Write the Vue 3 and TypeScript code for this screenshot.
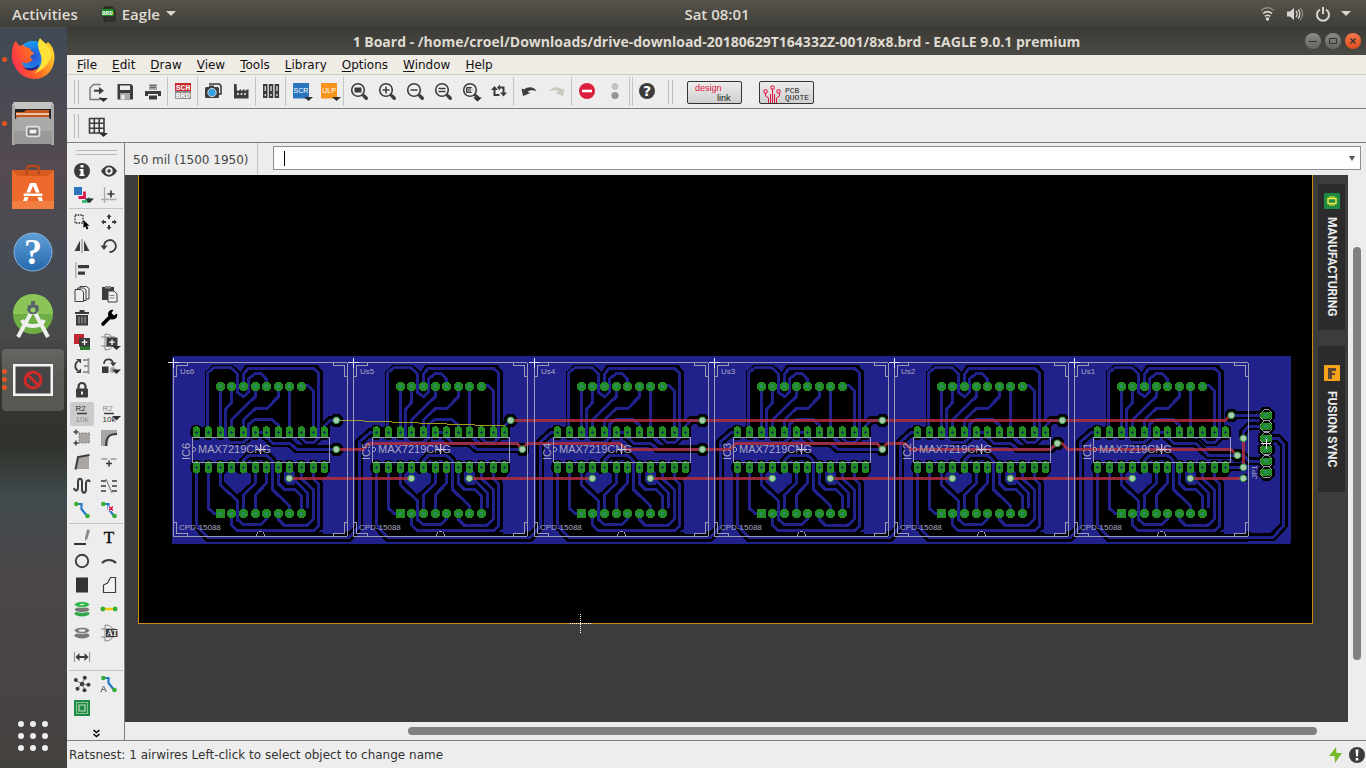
<script setup lang="ts">
import { ref } from 'vue'

interface Tool { id: string; label: string }
interface Module {
  id: number
  x: number
  topVia: [number, number]
  midVia: [number, number]
  midTrace: string
  topTrace: string
}

const ink = '#3c3c3c'
const lens = `<circle cx="11" cy="11" r="6.300" fill="#f0f0f0" stroke="${ink}" stroke-width="1.600"/><path d="M15.500 15.500l1 1" stroke="${ink}" stroke-width="2"/><path d="M17 17l2.300 2.300" stroke="${ink}" stroke-width="3.400" stroke-linecap="round"/>`

const icons: Record<string, string> = {
  open: `<path d="M15 5.500V4.500H8.500L5 8v11.500h10V17" fill="none" stroke="#777" stroke-width="1.400" stroke-linejoin="round"/><path d="M9 10.700h6" stroke="${ink}" stroke-width="2"/><path d="M14 7l5 3.700-5 3.700z" fill="${ink}"/><path d="M14 18h9l-4.500 4z" fill="#2e2e2e"/>`,
  save: `<path d="M4.500 4h13.500l2 2v13.500H4.500z" fill="${ink}"/><path d="M7 5.500h10V10H7z" fill="#eee"/><path d="M7 13h10v6.500H7z" fill="#aaa"/><path d="M8.500 15h3v4.500h-3z" fill="#eee"/>`,
  print: `<path d="M8 4h8v6H8z" fill="#aaa"/><path d="M9 5.500h6M9 7.500h6" stroke="#666"/><path d="M4 11h16v5H4z" fill="${ink}"/><path d="M7 14h10v6H7z" fill="#eee"/><path d="M8 15.500h8v4H8z" fill="${ink}"/>`,
  sch: `<path d="M4 4h16v8H4z" fill="#c9252d"/><path d="M4 12h16v8H4z" fill="#8d8d8d"/><text x="4.800" y="10.500" class="mono-tag">SCH</text><text x="4.800" y="18.500" class="mono-tag">BRD</text>`,
  cam: `<path d="M8 5h10.500l1.500 2v8h-2" fill="none" stroke="${ink}" stroke-width="1.600"/><rect x="4" y="8" width="14" height="11" rx="1.500" fill="${ink}"/><path d="M8 6.500h5V9H8z" fill="${ink}"/><circle cx="11" cy="13.500" r="4.200" fill="#3aa0e4" stroke="#eee" stroke-width=".8"/>`,
  fab: `<path d="M5 5h2.500l.5 6.500 1 .5 3-2v2l3.500-2v2l4-2v9.500H5z" fill="${ink}"/><path d="M8 15h9" stroke="#eee" stroke-width="1.500" stroke-dasharray="2 1.500"/>`,
  lib: `<path d="M4 5h4.500v14H4zM9.800 5h4.500v14H9.800zM15.600 5h4.500v14h-4.500z" fill="${ink}"/><path d="M5.500 7h1.500v5H5.500zM11.300 7h1.500v5h-1.500zM17.100 7h1.500v5h-1.500z" fill="#ccc"/><path d="M5.500 15h1.500v2H5.500zM11.300 15h1.500v2h-1.500zM17.100 15h1.500v2h-1.500z" fill="#ccc"/>`,
  scr: `<path d="M4 4h16v15.500H4z" fill="#2a75bd"/><text x="12" y="14" text-anchor="middle" class="sans-tag">SCR</text><path d="M15 18h9l-4.500 4z" fill="#2e2e2e"/>`,
  ulp: `<path d="M4 4h16v15.500H4z" fill="#f7941d"/><text x="12" y="14" text-anchor="middle" class="sans-tag">ULP</text><path d="M15 18h9l-4.500 4z" fill="#2e2e2e"/>`,
  zfit: `${lens}<path d="M7.500 8.500h7v5h-7z" fill="${ink}"/>`,
  zin: `${lens}<path d="M11 7.500v7M7.500 11h7" stroke="${ink}" stroke-width="1.500"/>`,
  zout: `${lens}<path d="M7.500 11h7" stroke="${ink}" stroke-width="1.500"/>`,
  zredraw: `${lens}<path d="M7.500 9.500h7M7.500 12.500h7" stroke="${ink}" stroke-width="1.300"/>`,
  zsel: `${lens}<path d="M7.500 8.500h5v5h-5z" fill="#888" stroke="${ink}"/><path d="M12 9h3v4h-3z" fill="#ddd"/><path d="M14 18.500h9l-4.500 4z" fill="#2e2e2e"/>`,
  refresh: `<path d="M7.500 9v7h5M16.500 15V8.500h-5" fill="none" stroke="${ink}" stroke-width="2"/><path d="M4 11l3.500-4L11 11zM13 13.500l3.500 4 3.500-4zM13 5.500v6l-3-3z" fill="${ink}"/>`,
  undo: `<path d="M4.500 9.500l1.500 7.500 7.500-3-3-1c1.500-2 5-2.500 9-1-2-4-8-5.500-12.500-1.500z" fill="${ink}"/>`,
  redo: `<path d="M19.500 9.500L18 17l-7.500-3 3-1c-1.500-2-5-2.500-9-1 2-4 8-5.500 12.500-1.500z" fill="#c8c8c0"/>`,
  stop: `<circle cx="12" cy="12" r="8" fill="#dc1f3c"/><path d="M7 10.700h10v2.600H7z" fill="#fff"/>`,
  traffic: `<circle cx="12" cy="7.500" r="3.400" fill="#c4c2bd"/><circle cx="12" cy="16.500" r="3.600" fill="#969492"/>`,
  help: `<circle cx="12" cy="12" r="8" fill="${ink}"/><text x="12" y="17" text-anchor="middle" class="q-mark">?</text>`,
  grid: `<path d="M4.500 4.500h14.500v14.500H4.500zM9.300 4.500v14.500M14.200 4.500v14.500M4.500 9.300h14.500M4.500 14.200h14.500" fill="none" stroke="${ink}" stroke-width="1.600"/><path d="M14 19h9l-4.500 4z" fill="#2e2e2e"/>`,

  info: `<circle cx="12" cy="12" r="8" fill="${ink}"/><path d="M10.500 6h3v2.500h-3zM9.500 10h4v5.500h1V17H9.500v-1.500h1v-4h-1z" fill="#fff"/>`,
  show: `<path d="M4 12c4-7.500 12-7.500 16 0-4 7.500-12 7.500-16 0z" fill="${ink}"/><circle cx="12" cy="12" r="3.700" fill="#eee"/><circle cx="12" cy="12" r="1.800" fill="${ink}"/>`,
  layers: `<path d="M12 18.500h7v-4" fill="none" stroke="#27ae60" stroke-width="2.600"/><path d="M8.500 14.500h6v-6" fill="none" stroke="#e0144c" stroke-width="2.800"/><path d="M4 4h8v8H4z" fill="#2a75bd"/><path d="M14.500 15.500h9.500l-4.500 4.500z" fill="#2e2e2e"/>`,
  mark: `<path d="M7.500 4v16M4 16.500h15.500" stroke="#aaa" stroke-width="1.300"/><path d="M14 7.500v7M10.500 11h7" stroke="${ink}" stroke-width="1.700"/>`,
  group: `<path d="M5 5h8v8H5z" fill="none" stroke="#222" stroke-width="1.300" stroke-dasharray="1.500 1.200"/><path d="M13.500 10v8l1.800-1.700 1.400 3.200 1.700-.8-1.400-3h2.500z" fill="#000"/>`,
  move: `<path d="M12 4l2.500 3h-5zM12 20l2.500-3h-5zM4 12l3-2.500v5zM20 12l-3-2.500v5zM11 7h2v2h-2zM11 15h2v2h-2zM7 11h2v2H7zM15 11h2v2h-2z" fill="${ink}"/>`,
  mirror: `<path d="M12 5v14" stroke="#999" stroke-width="1.300"/><path d="M10 6.500v10.500H4.500zM14 6.500v10.500h5.500z" fill="${ink}"/>`,
  rotate: `<path d="M7 13A6 6 0 1 1 12.500 18" fill="none" stroke="${ink}" stroke-width="1.800"/><path d="M3.500 11.500h7L7 16z" fill="${ink}"/>`,
  align: `<path d="M5.800 4v16" stroke="#aaa" stroke-width="1.400"/><path d="M8 7h11v3.300H8zM8 13.500h7v3.300H8z" fill="${ink}"/>`,
  copy: `<path d="M10 4.500h6.500l2.500 2V17h-9z" fill="#eee" stroke="${ink}"/><path d="M7.500 6h6l2.500 2v10.500H7.500z" fill="#eee" stroke="${ink}"/><path d="M5 7.500h6l2.500 2.500v9.500H5z" fill="#eee" stroke="${ink}"/>`,
  paste: `<path d="M5 5h12v13H5z" fill="${ink}"/><path d="M8 4h6v2.500H8z" fill="#888"/><path d="M11 9h6l3 3v8h-9z" fill="#eee" stroke="${ink}"/><path d="M12.500 13.500h5M12.500 16h5" stroke="#888"/>`,
  trash: `<path d="M5 6h14v2H5zM9.500 4h5v2h-5zM6 9h12v10.500H6z" fill="${ink}"/><path d="M9 10.500v7M12 10.500v7M15 10.500v7" stroke="#aaa"/>`,
  wrench: `<path d="M6 18l6.500-6.500" stroke="#000" stroke-width="3.600" stroke-linecap="round"/><path d="M11 8c0-3 3-5 5.500-4l-2 3 2.500 2.500 3-2c1 3-1 6-4.500 6-2.500 0-4.500-2-4.500-5.500z" fill="#000"/>`,
  add: `<path d="M4 4h10v10H4z" fill="#c1272d"/><path d="M10 15h10v5H10z" fill="#2c7a2c"/><path d="M9 8h11v8.500H9z" fill="${ink}"/><path d="M14.500 9.500v5.500M11.800 12.200h5.500" stroke="#fff" stroke-width="1.300"/>`,
  addpart: `<path d="M4 7h14M4 16h13M8 4v16M8 4c6 0 9 4 10 8-1 4-4 8-10 8" fill="none" stroke="#888"/><path d="M9.500 7.500h11v9h-11z" fill="${ink}"/><path d="M15 9.500v5.500M12.200 12.200h5.500" stroke="#fff" stroke-width="1.300"/><path d="M15 16h9l-4.500 4z" fill="#2e2e2e"/>`,
  pinswap: `<path d="M8 7a6 6 0 0 0 0 10" fill="none" stroke="${ink}" stroke-width="1.800"/><path d="M6 5h5v4.500zM6 19h5v-4.500z" fill="${ink}"/><path d="M18.500 4v16M13 6h5M14 12h4M13 18h5" stroke="#999" stroke-width="1.800"/>`,
  replace: `<path d="M7 10c0-6 8-6 9-1" fill="none" stroke="${ink}" stroke-width="1.600"/><path d="M13 8.500h6.500l-3.300 4zM5 12.500h6.500V19H5z" fill="${ink}"/><circle cx="16" cy="16" r="3" fill="#aaa"/><path d="M15 15.500h9l-4.500 4.500z" fill="#2e2e2e"/>`,
  lock: `<path d="M8.500 11V8.500a3.500 3.500 0 0 1 7 0V11" fill="none" stroke="${ink}" stroke-width="2.200"/><rect x="6" y="10.500" width="12" height="9" rx="1" fill="${ink}"/><path d="M11 13.500h2v3h-2z" fill="#eee"/>`,
  name: `<text x="5.500" y="9" class="r-tag dark">R2</text><path d="M7 11.500h10" stroke="${ink}" stroke-width="1.500"/><text x="5.500" y="20" class="r-tag pale">10k</text>`,
  value: `<text x="5.500" y="9" class="r-tag pale">R2</text><path d="M7 11.500h10" stroke="${ink}" stroke-width="1.500"/><text x="5.500" y="20" class="r-tag dark">10k</text><path d="M15 14h9l-4.500 4.500z" fill="#2e2e2e"/>`,
  smash: `<path d="M9 7h10.500v10H9z" fill="#a9a6a4"/><path d="M9 7h10.500v10H9z" fill="none" stroke="#777" stroke-dasharray="1.500 1.500"/><path d="M6 3.500v5M3.500 6h5M6 14.500v5M3.500 17h5" stroke="${ink}" stroke-width="1.400"/>`,
  miter: `<path d="M4 4h16v4c-7 0-9 3-9 12H4z" fill="#a9a6a4"/><path d="M9 20c0-9 3-12 11-12" fill="none" stroke="${ink}" stroke-width="2"/>`,
  split: `<path d="M8 7l11-2v14H5.500z" fill="#a9a6a4"/><path d="M5.500 19.500L8 7l11.500-2" fill="none" stroke="${ink}" stroke-width="2"/>`,
  optimize: `<path d="M4.500 9h6M13.500 9h6" stroke="#999" stroke-width="1.300"/><path d="M12 10.500v6M9 13.500h6" stroke="${ink}" stroke-width="1.600"/>`,
  meander: `<path d="M4 14c1 4 4 3 4-1V8c0-4.500 4-4.500 4 0v7c0 5 4 5 4 0V9c0-3 3-3.500 4-1" fill="none" stroke="${ink}" stroke-width="2"/>`,
  diff: `<path d="M4 7h5M4 12h5M4 17h5M15 7h5M15 12h5M15 17h5" stroke="${ink}" stroke-width="1.500"/><path d="M9 5l6 14" stroke="#888" stroke-width="1.200"/>`,
  route: `<path d="M6 6h5.500v5l6 7.500" fill="none" stroke="#2878c8" stroke-width="2.200"/><circle cx="6.300" cy="6" r="2.300" fill="#38b038"/><circle cx="17.500" cy="18" r="2.300" fill="#38b038"/>`,
  ripup: `<path d="M6 6h5.500v5l6 7.500" fill="none" stroke="#2878c8" stroke-width="2.200"/><circle cx="6.300" cy="6" r="2.300" fill="#38b038"/><circle cx="17.500" cy="18" r="2.300" fill="#38b038"/><path d="M11 8h6v5h-6z" fill="#fff"/><path d="M12 8.500l4 4M16 8.500l-4 4" stroke="#d2143a" stroke-width="1.600"/>`,
  line: `<path d="M4 19h12" stroke="#000" stroke-width="1.600"/><path d="M17 4.500l3 .5-2.500 8.500-2 2.500-.5-3z" fill="#888"/>`,
  text: `<text x="12" y="18" text-anchor="middle" class="t-tool">T</text>`,
  circle: `<circle cx="12" cy="12" r="6.200" fill="none" stroke="${ink}" stroke-width="1.900"/>`,
  arc: `<path d="M5 14c4-4 10-4 14 0" fill="none" stroke="${ink}" stroke-width="2.200"/>`,
  rect: `<path d="M6 4.500h12v15H6z" fill="#333"/>`,
  polygon: `<path d="M6.500 19.500V12l4-2 3-5.500h5v15z" fill="#f4f4f4" stroke="${ink}" stroke-width="1.200"/>`,
  via: `<ellipse cx="12" cy="16.500" rx="7.500" ry="3" fill="#2fa84a"/><ellipse cx="12" cy="12.500" rx="7.500" ry="3" fill="#777" stroke="#eee" stroke-width=".7"/><ellipse cx="12" cy="7.500" rx="7.500" ry="3" fill="#2fb84a" stroke="#eee" stroke-width=".7"/><ellipse cx="12" cy="7.500" rx="2.500" ry=".8" fill="#ddf0dd"/>`,
  signal: `<path d="M6 12h12" stroke="#f0c800" stroke-width="2.400"/><circle cx="5.800" cy="12" r="2.400" fill="#38b038"/><circle cx="18.200" cy="12" r="2.400" fill="#38b038"/>`,
  hole: `<ellipse cx="12" cy="14.500" rx="7.500" ry="3" fill="#777"/><ellipse cx="12" cy="9.500" rx="7.500" ry="3.200" fill="#777" stroke="#eee" stroke-width=".8"/><ellipse cx="12" cy="9.500" rx="3.500" ry="1.200" fill="#eee"/>`,
  attr: `<path d="M4 8h14M4 16h13M8 4v16M8 4c6 0 9 4 10 8-1 4-4 8-10 8" fill="none" stroke="#888"/><path d="M9 8h11.500v8H9z" fill="${ink}"/><text x="10" y="15" class="a-tag">AT</text>`,
  dimension: `<path d="M4.500 7v10M19.500 7v10" stroke="#999" stroke-width="1.200"/><path d="M8 12h8" stroke="${ink}" stroke-width="2"/><path d="M5.500 12l4-4v8zM18.500 12l-4-4v8z" fill="${ink}"/>`,
  ratsnest: `<path d="M12 12L5.500 8M12 12l3-6M12 12l7 .8M12 12l3 6M12 12l-4.500 4.500" stroke="#777"/><g fill="${ink}"><circle cx="12" cy="12" r="2.200"/><circle cx="5.800" cy="8" r="2"/><circle cx="14.800" cy="5.800" r="2"/><circle cx="18.500" cy="12.800" r="2"/><circle cx="14.500" cy="18.300" r="2"/><circle cx="7.500" cy="16.800" r="2"/></g>`,
  autoroute: `<path d="M6 6h5.500v5l6 7.500" fill="none" stroke="#2878c8" stroke-width="2.200"/><circle cx="6.300" cy="6" r="2.300" fill="#38b038"/><circle cx="17.500" cy="18" r="2.300" fill="#38b038"/><text x="3.500" y="20" class="auto-tag">A</text>`,
  drc: `<path d="M4 4h16v16H4z" fill="#1f8a44"/><path d="M6.500 6.500h11v11h-11z" fill="none" stroke="#d6ecd6" stroke-dasharray="1.200 .8"/><path d="M9 9h6v6H9z" fill="none" stroke="#bfe0c4" stroke-width="1.200"/>`,
}

const menus = ['File', 'Edit', 'Draw', 'View', 'Tools', 'Library', 'Options', 'Window', 'Help']

const t = (id: string, label: string): Tool => ({ id, label })
const topGroups: Tool[][] = [
  [t('open', 'Open'), t('save', 'Save'), t('print', 'Print')],
  [t('sch', 'Switch to schematic')],
  [t('cam', 'CAM processor'), t('fab', 'Manufacturing')],
  [t('lib', 'Use library')],
  [t('scr', 'Run script'), t('ulp', 'Run ULP')],
  [t('zfit', 'Zoom to fit'), t('zin', 'Zoom in'), t('zout', 'Zoom out'), t('zredraw', 'Redraw'), t('zsel', 'Zoom select'), t('refresh', 'Refresh')],
  [t('undo', 'Undo'), t('redo', 'Redo')],
  [t('stop', 'Cancel'), t('traffic', 'Execute')],
  [t('help', 'Help')],
]
const sideGroups: (Tool | null)[][] = [
  [t('info', 'Info'), t('show', 'Show'), t('layers', 'Layers'), t('mark', 'Mark')],
  [
    t('group', 'Group'), t('move', 'Move'), t('mirror', 'Mirror'), t('rotate', 'Rotate'),
    t('align', 'Align'), null, t('copy', 'Copy'), t('paste', 'Paste'),
    t('trash', 'Delete'), t('wrench', 'Change'), t('add', 'Add'), t('addpart', 'Add part'),
    t('pinswap', 'Pinswap'), t('replace', 'Replace'), t('lock', 'Lock'), null,
    t('name', 'Name'), t('value', 'Value'), t('smash', 'Smash'), t('miter', 'Miter'),
    t('split', 'Split'), t('optimize', 'Optimize'), t('meander', 'Meander'), t('diff', 'Slice'),
    t('route', 'Route'), t('ripup', 'Ripup'),
  ],
  [
    t('line', 'Line'), t('text', 'Text'), t('circle', 'Circle'), t('arc', 'Arc'),
    t('rect', 'Rect'), t('polygon', 'Polygon'), t('via', 'Via'), t('signal', 'Signal'),
    t('hole', 'Hole'), t('attr', 'Attribute'), t('dimension', 'Dimension'), null,
  ],
  [t('ratsnest', 'Ratsnest'), t('autoroute', 'Autorouter'), t('drc', 'DRC'), null],
]

const activeTool = ref('name')
const command = ref('')

/* Board geometry: module drawings use a grid of three units per screen pixel. */
const pins = [94, 130, 166, 199, 235, 271, 304, 340, 373, 409, 445, 478]
const pads = [166, 199, 235, 271, 304, 340, 373, 409]
const baseMid = 'M271 247H304V262L325 280H375L395 298'
const modules: Module[] = [
  { id: 6, x: 165, topVia: [514, 211], midVia: [514, 298], midTrace: baseMid + 'H514', topTrace: 'M478 247V228L495 211H514' },
  { id: 5, x: 345, topVia: [497, 211], midVia: [532, 298], midTrace: baseMid + 'H532', topTrace: 'M478 247V228L497 211' },
  { id: 4, x: 526, topVia: [529, 211], midVia: [529, 298], midTrace: baseMid + 'H529', topTrace: 'M478 247V228L495 211H529' },
  { id: 3, x: 706, topVia: [529, 211], midVia: [529, 298], midTrace: baseMid + 'H529', topTrace: 'M478 247V228L495 211H529' },
  { id: 2, x: 886, topVia: [529, 211], midVia: [514, 280], midTrace: baseMid + 'H495L514 280', topTrace: 'M478 247V228L495 211H529' },
  { id: 1, x: 1066, topVia: [496, 196], midVia: [514, 316], midTrace: 'M271 247H304V262L325 280H390L427 316H514', topTrace: 'M496 196V190' },
]
const traces = [
  'M129 247V68L146 53H197L218 72V128L236 140L252 125V85L270 72H290L304 88V108',
  'M235 108V72L250 55H445L461 70V262L445 279H425L409 262V247',
  'M166 108V247',
  'M199 108V158L183 177V265L195 278H235L252 262V222L268 210H322L340 225V247',
  'M271 108V140L199 210V247',
  'M340 108V140L304 177H270L235 210V247',
  'M373 108V247',
  'M409 108H430L445 122V247',
  'M94 352V525L130 564H550L555 559',
  'M130 352V475L147 491H166',
  'M166 352V405L217 452V508L235 524H288L304 508V491',
  'M271 352V400L235 435V491',
  'M304 352V400L271 435V491',
  'M235 352V332L250 317H305L322 332V418L373 468V491',
  'M340 352V400L360 420H392L409 438V491',
  'M385 385L428 430V475',
  'M409 352V385L445 420V508L425 526H358L340 508V491',
  'M445 352V385L461 402V528L447 541H215L199 525V491',
]
const link = 'M94 247H75L43 277V530L10 564H0'
const octagon = (cx: number, cy: number, r: number): string => {
  const k = r * 0.42
  return `M${cx - k} ${cy - r}h${2 * k}L${cx + r} ${cy - k}v${2 * k}L${cx + k} ${cy + r}h${-2 * k}L${cx - r} ${cy + k}v${-2 * k}z`
}
const headerPins = [196, 229, 265, 298, 334, 367]
</script>

<template>
  <div class="desktop">
    <header class="topbar">
      <button class="top-item">Activities</button>
      <button class="top-item app-menu">
        <svg width="14" height="16" viewBox="0 0 14 16" aria-hidden="true">
          <path d="M2 1h8l3 3v11H2z" fill="#33342f" stroke="#22231f" />
          <path d="M0 3h12v7H0z" fill="#1e8a1e" />
          <text x="0" y="9" class="brd-tag">BRD</text>
        </svg>
        Eagle
        <span class="caret-down"></span>
      </button>
      <time class="clock">Sat 08:01</time>
      <button class="tray" aria-label="System menu">
        <svg width="84" height="18" viewBox="0 0 84 18" fill="none" stroke="#d8d6d0" aria-hidden="true">
          <path d="M1 5.500c4-3.500 9-3.500 13 0" stroke="#8d8b85" stroke-width="1.600" />
          <path d="M3 8.500c3-2.500 6-2.500 9 0M4.800 11.300c2-1.500 3.500-1.500 5.500 0" stroke-width="1.600" />
          <circle cx="7.500" cy="14" r="1.800" fill="#d8d6d0" stroke="none" />
          <path d="M27 6.500h3l4-3.500v12l-4-3.500h-3z" fill="#d8d6d0" stroke="none" />
          <path d="M36 6c1.500 1.500 1.500 4.500 0 6M38 4.500c2.500 2.500 2.500 6.500 0 9" stroke-width="1.300" />
          <path d="M40 3c3.500 3.500 3.500 8.500 0 12" stroke="#8d8b85" stroke-width="1.300" />
          <path d="M60 4.500a6 6 0 1 0 6 0M63 2v7" stroke-width="2" />
        </svg>
        <span class="caret-down"></span>
      </button>
    </header>

    <div class="workspace">
      <nav class="dock" aria-label="Dock">
        <button class="dock-app" aria-label="Firefox">
          <i class="dot"></i>
          <svg width="48" height="48" viewBox="0 0 48 48">
            <defs>
              <linearGradient id="fox" x1="0" y1="0.700" x2="1" y2="0.300">
                <stop offset="0" stop-color="#ff2a55" /><stop offset=".5" stop-color="#ff6a20" /><stop offset="1" stop-color="#ffd52a" />
              </linearGradient>
              <radialGradient id="globe"><stop offset="0" stop-color="#2a4bd0" /><stop offset="1" stop-color="#18a0f0" /></radialGradient>
            </defs>
            <circle cx="24" cy="21" r="16" fill="url(#globe)" />
            <path d="M5 7c-3 8-3 16 0 22 8 18 32 19 39 1 2-6 2-12 0-17-1-3-3-5-5-7-3 3-5 5-5 8 3 9 0 18-9 20-7 1-12-5-12-8 4 3 8 0 11-2-4-3-3-5 1-6 0-2-4-2-4-6-3 0-5-1-7-3-2 0-2 0-3 1-2-1-3-3-4-5-1 1-1 1-2 2z" fill="url(#fox)" />
            <path d="M31 2c3 4 10 7 12 17-4 12-12 16-18 19 8-7 9-15 6-21-2-6-3-10 0-15z" fill="#ffe13a" />
            <path d="M12 29c4 5 14 4 18-1-1 7-11 10-18 1z" fill="#2a1a7a" />
          </svg>
        </button>
        <button class="dock-app" aria-label="Files">
          <i class="dot"></i>
          <svg width="48" height="48" viewBox="0 0 48 48">
            <path d="M5 2h38l2 3v12H3V5z" fill="#c4c4c2" />
            <path d="M6 9h36v10H6z" fill="#222" />
            <path d="M7 12h8l2-2h23v10H7z" fill="#c6551e" />
            <path d="M7 14h33" stroke="#f4e6d6" stroke-width="1.500" />
            <path d="M3 5h3v40H3zM42 5h3v40h-3z" fill="#a8a8a6" />
            <path d="M5 19h2l1-2h32l1 2h2v25H5z" fill="#a9a9a7" />
            <path d="M5 31h38v13H5z" fill="#8a8a8a" opacity=".5" />
            <rect x="17.500" y="26.500" width="13" height="10" rx="2" fill="none" stroke="#e0e0de" stroke-width="1.500" />
            <rect x="20" y="29" width="8" height="5" fill="#f5f5f5" stroke="#555" />
          </svg>
        </button>
        <button class="dock-app" aria-label="Ubuntu Software">
          <svg width="48" height="48" viewBox="0 0 48 48">
            <path d="M3 6h42v39H3z" fill="#ee6a2c" />
            <path d="M3 6h42L39 12H9z" fill="#d65a20" />
            <path d="M3 37h42v8H3z" fill="#f58a50" opacity=".6" />
            <path d="M18 11V5q0-3 3-3h6q3 0 3 3v6" fill="none" stroke="#b84a1a" stroke-width="2.500" />
            <path d="M21 19h6l7 18h-4l-1.500-4h-9L18 37h-4z" fill="#fff" />
            <path d="M24 22l-3.500 8h7z" fill="#ee6a2c" />
            <rect x="14" y="29" width="20" height="3.500" rx="1.500" fill="#fff" stroke="#ee6a2c" />
          </svg>
        </button>
        <button class="dock-app" aria-label="Help">
          <svg width="48" height="48" viewBox="0 0 48 48">
            <defs><linearGradient id="hp" x1="0" y1="0" x2="0" y2="1"><stop offset="0" stop-color="#5f9ed6" /><stop offset="1" stop-color="#2568ad" /></linearGradient></defs>
            <circle cx="24" cy="24" r="19" fill="url(#hp)" stroke="#86b6e0" stroke-width="1" />
            <text x="24" y="36" text-anchor="middle" class="dock-q">?</text>
          </svg>
        </button>
        <button class="dock-app" aria-label="Android Studio">
          <svg width="48" height="52" viewBox="0 0 48 52">
            <circle cx="24" cy="24" r="20" fill="#6fae45" />
            <path d="M4 24a20 20 0 0 1 40 0z" fill="#8cc45a" />
            <path d="M13 30c3 8 19 8 22 0M23 21L9 47M25 21l14 26" fill="none" stroke="#eee" stroke-width="4" />
            <path d="M22 11h4v4h3l1 5-3 4h-6l-3-4 1-5h3z" fill="#59646a" />
            <circle cx="24" cy="20" r="2.500" fill="#9ad06a" />
          </svg>
        </button>
        <button class="dock-app running" aria-label="Eagle">
          <i class="dot three"></i>
          <svg width="48" height="48" viewBox="0 0 48 48">
            <path d="M4 8h40v32H4z" fill="#f4f4f4" />
            <path d="M6.500 10.500h35v27h-35z" fill="#444" />
            <circle cx="24" cy="24" r="8" fill="none" stroke="#d02a2a" stroke-width="3" />
            <path d="M18.500 18.500l11 11" stroke="#d02a2a" stroke-width="3" />
          </svg>
        </button>
        <button class="apps-grid" aria-label="Show applications">
          <i v-for="n in 9" :key="n"></i>
        </button>
      </nav>

      <main class="window">
        <div class="titlebar">
          <h1>1 Board - /home/croel/Downloads/drive-download-20180629T164332Z-001/8x8.brd - EAGLE 9.0.1 premium</h1>
          <div class="win-buttons">
            <button aria-label="Minimize"><svg width="16" height="16"><path d="M4 8.500h8" stroke="#33322e" /></svg></button>
            <button aria-label="Maximize"><svg width="16" height="16"><path d="M4.500 5.500h7v5h-7z" stroke="#33322e" fill="none" /></svg></button>
            <button class="close" aria-label="Close"><svg width="16" height="16"><path d="M5.500 5.500l5 5M10.500 5.500l-5 5" stroke="#33322e" stroke-width="1.200" /></svg></button>
          </div>
        </div>

        <nav class="menubar">
          <button v-for="m in menus" :key="m"><u>{{ m[0] }}</u>{{ m.slice(1) }}</button>
        </nav>

        <div class="toolbar">
          <span class="grip"></span>
          <div v-for="(g, gi) in topGroups" :key="gi" class="tool-group" :class="{ wide: gi === topGroups.length - 1 }">
            <button v-for="b in g" :key="b.id" class="tool" :aria-label="b.label">
              <svg width="24" height="24" viewBox="0 0 24 24" v-html="icons[b.id]"></svg>
            </button>
          </div>
          <span class="grip second"></span>
          <button class="brand" aria-label="design link">
            <svg width="53" height="21" viewBox="0 0 53 21">
              <text x="7" y="9" class="brand-text red">design</text>
              <text x="29" y="19" class="brand-text">link</text>
            </svg>
          </button>
          <button class="brand" aria-label="PCB quote">
            <svg width="53" height="21" viewBox="0 0 53 21">
              <path d="M5.500 11v3l3 2v5M12.500 6v15M19.500 11v3l-3 2v5M10.500 21v-9M14.500 21v-9" fill="none" stroke="#e0143c" />
              <path d="M4 8h3v3H4zM11 4h3v3h-3zM17 8h3v3h-3z" fill="#fff" stroke="#e0143c" />
              <text x="25" y="11" class="quote-text">PCB</text>
              <text x="25" y="18" class="quote-text">QUOTE</text>
            </svg>
          </button>
        </div>

        <div class="toolbar">
          <span class="grip"></span>
          <button class="tool" aria-label="Grid">
            <svg width="24" height="24" viewBox="0 0 24 24" v-html="icons.grid"></svg>
          </button>
        </div>

        <div class="editor">
          <aside class="tools">
            <span class="grip-flat"></span>
            <div v-for="(g, gi) in sideGroups" :key="gi" class="side-group">
              <template v-for="(b, bi) in g" :key="bi">
                <button v-if="b" class="side-tool" :class="{ active: b.id === activeTool }" :aria-label="b.label" @click="activeTool = b.id">
                  <svg width="24" height="24" viewBox="0 0 24 24" v-html="icons[b.id]"></svg>
                </button>
                <span v-else></span>
              </template>
            </div>
            <button class="more" aria-label="More tools">
              <svg width="9" height="9" viewBox="0 0 9 9"><path d="M1.500 1l3 2.500L7.500 1M1.500 5l3 2.500L7.500 5" fill="none" stroke="#000" stroke-width="1.500" /></svg>
            </button>
          </aside>

          <section class="view">
            <div class="command-row">
              <output class="coords">50 mil (1500 1950)</output>
              <div class="combo">
                <span class="text-caret"></span>
                <input v-model="command" type="text" aria-label="Command line" />
                <button aria-label="Command history"><span></span></button>
              </div>
            </div>

            <div class="canvas-area">
              <div class="canvas">
                <svg class="board" width="100%" height="100%" role="img" aria-label="Board layout">
                  <g transform="translate(-125 -175)" shape-rendering="crispEdges">
                    <rect x="138.500" y="170.500" width="1174" height="453" fill="#000" stroke="#d18616" />
                    <rect x="172" y="356" width="1119" height="188" rx="2" fill="#21218c" />

                    <g v-for="m in modules" :key="'c' + m.id" :transform="`translate(${m.x} 350) scale(.33333)`">
                      <path d="M121 240V65L143 45H203L227 66L241 45H457L474 65V225L495 232V262H82V230H121z" fill="#000" />
                      <path d="M86 345H490V372L470 390L474 400V535L462 545H474V556H130L86 520z" fill="#000" />
                      <g fill="none" stroke="#000" stroke-width="25">
                        <path :d="m.topTrace" /><path :d="m.midTrace" />
                        <path v-if="m.id < 6" :d="link" />
                        <path d="M199 247V265L205 274H235L252 262M409 247V262L425 276H445L461 262V247" />
                        <path d="M94 352V525L130 564H540L555 549" />
                        <path d="M235 352V332L250 317H305L322 332V360" />
                      </g>
                      <path v-for="x in pins" :key="'h' + x" :d="`M${x} 242V252M${x} 347V357`" stroke="#000" stroke-width="36" stroke-linecap="round" />
                      <path :d="octagon(m.topVia[0], m.topVia[1], 20)" fill="#000" />
                      <path :d="octagon(m.midVia[0], m.midVia[1], 20)" fill="#000" />
                      <path d="M178 372L190 362H210L222 372L246 366L258 372V397L217 433L178 395z" fill="#21218c" />
                      <path d="M358 368L366 360H382L391 368V404H365L358 397z" fill="#21218c" />
                      <g fill="none" stroke="#21218c" stroke-width="9">
                        <path v-for="(d, i) in traces" :key="i" :d="d" />
                        <path :d="m.topTrace" /><path :d="m.midTrace" />
                        <path v-if="m.id < 6" :d="link" />
                      </g>
                    </g>

                    <g transform="translate(1060 350) scale(.33333)" fill="none">
                      <g stroke="#000" stroke-width="25">
                        <path d="M514 196H619M550 265V245L566 229H619M550 352H496M532 316H550L568 334H619M550 385H560" />
                        <path d="M619 265H655L672 283V525L638 561H540" />
                      </g>
                      <path v-for="y in headerPins" :key="'k' + y" :d="octagon(619, y, 25)" fill="#000" />
                      <g stroke="#21218c" stroke-width="9">
                        <path d="M514 196H619M550 265V245L566 229H619M550 352H496M532 316H550L568 334H619" />
                        <path d="M619 265H655L672 283V525L638 564H540" />
                      </g>
                    </g>

                    <g v-for="m in modules" :key="'p' + m.id" :transform="`translate(${m.x} 350) scale(.33333)`">
                      <path v-for="x in pins" :key="x" :d="`M${x} 240V254M${x} 345V359`" stroke="#228c22" stroke-width="22" stroke-linecap="round" />
                      <path v-for="x in pins" :key="'d' + x" :d="`M${x - 5} 247h10M${x} 242v10M${x - 5} 352h10M${x} 347v10`" stroke="#12305c" stroke-width="3" />
                      <path v-for="x in pads" :key="'t' + x" :d="octagon(x, 109, 14)" fill="#228c22" />
                      <path v-for="x in pads.slice(1)" :key="'b' + x" :d="octagon(x, 491, 14)" fill="#228c22" />
                      <path d="M153 478h27v27h-27z" fill="#228c22" />
                      <path v-for="x in pads" :key="'e' + x" :d="octagon(x, 109, 6) + octagon(x, 491, 6)" fill="#2a8c58" />
                    </g>
                    <g transform="translate(1060 350) scale(.33333)">
                      <g v-for="y in headerPins" :key="y">
                        <path :d="octagon(619, y, 17)" fill="none" stroke="#9c9cac" stroke-width="3" />
                        <rect x="601" :y="y - 10" width="36" height="20" rx="9" fill="#228c22" />
                        <path :d="octagon(619, y, 6)" fill="#2a8c58" />
                      </g>
                    </g>

                    <g fill="none" stroke="#b4303c" stroke-opacity=".82" stroke-width="3">
                      <path d="M510 420.500H1225L1231 415" />
                      <path d="M336 449.500H363L369 443.500H517L522 449.500L527 443.500H620L627 449.500H730L736 443.500H877L882 449.500L887 443.500H905L911 449.500H1050L1057 443.500H1062L1068 449.500H1231L1237 455.500" />
                      <path d="M289 478.500H411M470 478.500H592M650 478.500H772M830 478.500H952M1010 478.500H1132M1190 478.500H1243M1243.500 438V467" />
                    </g>
                    <path d="M336 420.500H364M364 421.500H392M392 422.500H419M419 423.500H447M447 424.500H475M475 425.500H505" stroke="#a09a20" />

                    <g v-for="m in modules" :key="'s' + m.id">
                      <g :transform="`translate(${m.x} 350) scale(.33333)`">
                        <g fill="none" stroke="#9a9ab4" stroke-width="3">
                          <path d="M25 38H547V559H25zM82 262H494V338H82z" />
                          <path d="M25 80H34V46H68V38M505 38V46H540V80H547M25 517H34V550H68V559M505 559V550H540V517H547" />
                          <path d="M82 290Q92 291 92 298T82 306M275 558V552L281 545H292L298 552V558" />
                        </g>
                        <g v-for="(v, i) in [m.topVia, m.midVia, [373, 385], [199, 385]]" :key="i" shape-rendering="auto">
                          <template v-if="i < 3 || m.id < 6">
                            <path :d="octagon(v[0], v[1], 11)" fill="#3a9a4c" />
                            <path :d="octagon(v[0], v[1], 8)" fill="#a9ccae" />
                          </template>
                        </g>
                        <path d="M10 38H41M25 23V53M272 298H302M287 283V313" stroke="#e8e8f4" stroke-width="3" />
                      </g>
                      <text :x="m.x + 15" y="374" class="silk small">Us{{ m.id }}</text>
                      <text :x="m.x + 14" y="530" class="silk small">CPD-15088</text>
                      <text :x="m.x + 33" y="453" class="silk">MAX7219CNG</text>
                      <text :transform="`translate(${m.x + 25} 460) rotate(-90)`" class="silk">IC{{ m.id }}</text>
                    </g>
                    <g transform="translate(1060 350) scale(.33333)">
                      <g v-for="y in [265, 352, 385]" :key="y" shape-rendering="auto">
                        <path :d="octagon(550, y, 11)" fill="#3a9a4c" />
                        <path :d="octagon(550, y, 8)" fill="#a9ccae" />
                      </g>
                      <path d="M604 281H634M619 266V296" stroke="#e8e8f4" stroke-width="3" />
                    </g>
                    <text transform="translate(1257 479) rotate(-90)" class="silk small">JP1</text>
                    <path d="M570 623.500H591M580.500 614V633" stroke="#fff" stroke-dasharray="1 1" />
                  </g>
                </svg>

                <button class="side-tab manufacturing">
                  <svg width="16" height="16" viewBox="0 0 16 16" aria-hidden="true">
                    <rect width="16" height="16" rx="1" fill="#1f8a44" />
                    <path d="M4 5.500h8v5H4z" fill="none" stroke="#f0f040" stroke-width="1.500" />
                    <path d="M6 3v2M8 3v2M10 3v2M6 11v2M8 11v2M10 11v2" stroke="#e8e840" />
                  </svg>
                  <span>MANUFACTURING</span>
                </button>
                <button class="side-tab fusion">
                  <svg width="16" height="16" viewBox="0 0 16 16" aria-hidden="true">
                    <rect width="16" height="16" rx="1" fill="#f7a21b" />
                    <path d="M4 3h8v3H8v2h3v2H8v4H4z" fill="#5a4632" />
                  </svg>
                  <span>FUSION SYNC</span>
                </button>
              </div>
              <div class="v-scroll"><i></i></div>
            </div>
            <div class="h-scroll"><i></i></div>
          </section>
        </div>

        <footer class="status">
          <p>Ratsnest: 1 airwires Left-click to select object to change name</p>
          <svg width="36" height="18" viewBox="0 0 36 18" aria-hidden="true">
            <path d="M7 1L0 10h5.500L6 17l7-10H7.500z" fill="#76b82a" />
            <circle cx="28" cy="9" r="8" fill="#3c3c3c" />
            <path d="M26.500 3.500h3l-.6 7h-1.800zM26.700 12h2.600v2.500h-2.600z" fill="#fff" />
          </svg>
        </footer>
      </main>
    </div>
  </div>
</template>

<style>
body {
  margin: 0;
}
.mono-tag {
  font: bold 8px "Liberation Mono", monospace;
  fill: #fff;
}
.sans-tag {
  font: 7px "Liberation Sans", sans-serif;
  fill: #fff;
}
.q-mark {
  font: bold 14px "DejaVu Sans", sans-serif;
  fill: #fff;
}
.r-tag {
  font: 8px "Liberation Sans", sans-serif;
}
.r-tag.dark {
  fill: #2c2c2c;
}
.r-tag.pale {
  fill: #8c8c8c;
}
.t-tool {
  font: 17px "Liberation Serif", serif;
  fill: #000;
  stroke: #000;
  stroke-width: 0.3px;
}
.a-tag {
  font: bold 8px "Liberation Serif", serif;
  fill: #fff;
}
.auto-tag {
  font: 9px "Liberation Sans", sans-serif;
  fill: #222;
}
</style>

<style scoped>
* {
  box-sizing: border-box;
}
button {
  margin: 0;
  padding: 0;
  border: 0;
  background: none;
  color: inherit;
  font: inherit;
}
svg {
  display: block;
}
.desktop {
  display: flex;
  flex-direction: column;
  height: 100vh;
  font: 12px "DejaVu Sans", sans-serif;
  color: #1c1c1c;
}
.topbar {
  position: relative;
  display: flex;
  flex: none;
  align-items: center;
  height: 27px;
  padding: 0 12px;
  background: linear-gradient(#56534a, #3f3e39);
  color: #dfdbd2;
  font: 600 15px "Open Sans", sans-serif;
}
.app-menu {
  display: flex;
  align-items: center;
  gap: 6px;
  margin-left: 24px;
}
.brd-tag {
  font: bold 6px "Liberation Mono", monospace;
  fill: #fff;
}
.caret-down {
  border: 5px solid transparent;
  border-top-color: #d8d6d0;
  border-bottom: 0;
}
.clock {
  position: absolute;
  left: 50%;
  margin-left: 34px;
  transform: translateX(-50%);
}
.tray {
  display: flex;
  align-items: center;
  margin: 0 3px 0 auto;
}
.tray svg {
  margin-right: -3px;
}
.workspace {
  display: flex;
  flex: 1;
  min-height: 0;
}
.dock {
  display: flex;
  flex: none;
  flex-direction: column;
  align-items: center;
  gap: 2px;
  width: 67px;
  padding: 2px 2px 17px;
  background: linear-gradient(#3f4a54 0, #554a51 140px, #474b52 230px, #484a49 310px, #34362f 350px, #30332c 420px, #414a4e 470px, #4b4547 560px, #484446 640px, #44423f);
}
.dock-app {
  position: relative;
  display: grid;
  place-items: center;
  width: 62px;
  height: 62px;
  margin-right: 1px;
  border-radius: 4px;
}
.running {
  background: rgba(255, 255, 255, 0.18);
}
.dot {
  position: absolute;
  left: 0;
  top: 28px;
  width: 5px;
  height: 5px;
  border-radius: 50%;
  background: #e95420;
}
.dot.three {
  box-shadow: 0 -8px #e95420, 0 8px #e95420;
}
.dock-q {
  font: bold 36px "Liberation Serif", serif;
  fill: #fff;
}
.apps-grid {
  display: grid;
  grid-template-columns: repeat(3, 6px);
  gap: 6px;
  margin: auto 1px 0 0;
}
.apps-grid i {
  width: 6px;
  height: 6px;
  border-radius: 50%;
  background: #eee;
}
.window {
  display: flex;
  flex: 1;
  flex-direction: column;
  min-width: 0;
  background: #ededed;
}
.titlebar {
  position: relative;
  display: flex;
  flex: none;
  align-items: center;
  justify-content: center;
  height: 28px;
  background: linear-gradient(#3b3a36, #4b4943);
  color: #dfdbd2;
}
.titlebar h1 {
  margin: 0;
  font: 700 14px "Open Sans", sans-serif;
}
.win-buttons {
  position: absolute;
  right: 5px;
  display: flex;
  gap: 4px;
}
.win-buttons button {
  border-radius: 50%;
  background: linear-gradient(#8d8b85, #66645e);
}
.win-buttons .close {
  background: linear-gradient(#f4794d, #df4c1c);
}
.menubar {
  display: flex;
  flex: none;
  gap: 1px;
  height: 20px;
  padding-left: 3px;
  border-bottom: 1px solid #cfcdc9;
  background: #efebe5;
  color: #111;
}
.menubar button {
  padding: 0 7px;
}
.menubar u {
  text-underline-offset: 2px;
}
.toolbar {
  display: flex;
  flex: none;
  align-items: center;
  height: 34px;
  padding-left: 7px;
  border-bottom: 1px solid #7f7f7f;
}
.grip {
  width: 5px;
  height: 24px;
  margin-right: 4px;
  border: solid #b9b9b9;
  border-width: 0 1px;
}
.grip.second {
  margin: 0 14px 0 7px;
}
.tool-group {
  display: flex;
}
.tool-group + .tool-group::before {
  content: "";
  align-self: center;
  width: 1px;
  height: 29px;
  border-left: 1px solid #c4c4c4;
}
.tool-group.wide::before {
  width: 2px;
  border-right: 1px solid #c4c4c4;
}
.tool {
  display: grid;
  place-items: center;
  width: 28px;
  height: 28px;
}
.brand {
  margin: 1px 17px 0 0;
  border: 1px solid #333;
  border-radius: 2px;
  background: linear-gradient(#ececec, #cfcfcf);
}
.brand-text {
  font: 9px "Liberation Sans", sans-serif;
  fill: #111;
}
.brand-text.red {
  fill: #e0143c;
}
.quote-text {
  font: 8px "Liberation Mono", monospace;
  fill: #222;
}
.editor {
  display: flex;
  flex: 1;
  min-height: 0;
}
.tools {
  display: flex;
  flex: none;
  flex-direction: column;
  width: 58px;
  padding: 7px 1px 0 2px;
  border-right: 1px solid #7f7f7f;
}
.grip-flat {
  height: 5px;
  margin: 0 6px 4px 7px;
  border: solid #b9b9b9;
  border-width: 1px 0;
}
.side-group {
  display: grid;
  grid-template-columns: 24px 24px;
  grid-auto-rows: 24px;
  column-gap: 3px;
  padding-left: 1px;
}
.side-group + .side-group {
  margin-top: 1px;
  padding-top: 1px;
  border-top: 1px solid #c4c4c4;
}
.side-tool.active {
  border-radius: 2px;
  background: #cbcbcb;
}
.more {
  align-self: center;
  margin-top: 9px;
}
.view {
  display: flex;
  flex: 1;
  flex-direction: column;
  min-width: 0;
}
.command-row {
  display: flex;
  flex: none;
  align-items: center;
  height: 32px;
  padding-right: 5px;
}
.coords {
  height: 32px;
  padding: 0 8px;
  border-right: 1px solid #c4c4c4;
  color: #444;
  line-height: 34px;
}
.combo {
  display: flex;
  flex: 1;
  align-items: center;
  height: 24px;
  margin: 0 0 2px 15px;
  padding: 0 5px 0 10px;
  border: 1px solid #8e8e8e;
  background: #fff;
}
.text-caret {
  width: 1px;
  height: 15px;
  background: #000;
}
.combo input {
  flex: 1;
  min-width: 0;
  padding: 0;
  border: 0;
  outline: 0;
  background: none;
  font: inherit;
}
.combo button span {
  display: block;
  border: 3px solid transparent;
  border-top: 5px solid #555;
  border-bottom: 0;
}
.canvas-area {
  display: flex;
  flex: 1;
  min-height: 0;
}
.canvas {
  position: relative;
  flex: 1;
  min-width: 0;
  overflow: hidden;
  background: #3c3c3c;
}
.silk {
  font: 11px "Liberation Sans", sans-serif;
  fill: #a8a8c0;
}
.silk.small {
  font-size: 8px;
}
.side-tab {
  position: absolute;
  right: 3px;
  display: flex;
  flex-direction: column;
  align-items: center;
  gap: 8px;
  width: 27px;
  height: 146px;
  background: #2b2b2b;
  color: #ececec;
  font: 700 12px Roboto, sans-serif;
}
.side-tab span {
  writing-mode: vertical-rl;
}
.manufacturing {
  top: 9px;
  padding-top: 9px;
}
.fusion {
  top: 171px;
  gap: 10px;
  padding-top: 19px;
}
.v-scroll {
  flex: none;
  width: 18px;
  padding: 72px 5px 62px;
}
.v-scroll i {
  display: block;
  height: 100%;
  border-radius: 4px;
  background: #808080;
}
.h-scroll {
  flex: none;
  height: 18px;
  padding: 5px 49px 5px 283px;
}
.h-scroll i {
  display: block;
  height: 8px;
  border-radius: 4px;
  background: #808080;
}
.status {
  display: flex;
  flex: none;
  align-items: center;
  justify-content: space-between;
  height: 28px;
  padding: 0 1px 0 2px;
  border-top: 1px solid #7f7f7f;
  color: #333;
}
.status p {
  margin: 0;
}
</style>
